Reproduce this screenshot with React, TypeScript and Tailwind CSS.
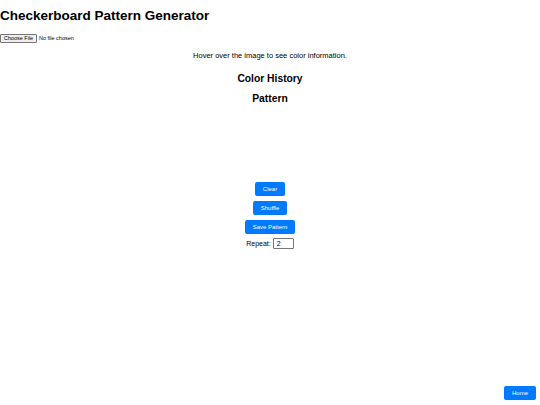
import { useState } from "react";

// Checkerboard pattern generator: upload, colour info, history, pattern controls.

function Btn({ label, w }: { label: string; w: string }) {
  return (
    <button
      className={`h-[14px] ${w} rounded-[2px] bg-[#007bff] text-white text-[6px] leading-none flex items-center justify-center`}
    >
      {label}
    </button>
  );
}

export default function App() {
  const [repeat, setRepeat] = useState("2");

  return (
    <div className="min-h-[405px] bg-white text-black font-['Liberation_Sans',Arial,sans-serif]">
      <h1 className="pt-[7px] text-[13.5px] font-bold leading-[18px]">Checkerboard Pattern Generator</h1>

      <div className="mt-[9px] flex items-center gap-[2px] text-[5.5px] leading-none">
        <span className="h-[9px] w-[37px] flex items-center justify-center border border-[#767676] rounded-[1px] bg-[#efefef]">
          Choose File
        </span>
        <span>No file chosen</span>
      </div>

      <div className="flex flex-col items-center">
        <p className="mt-[8px] text-[7.5px] leading-[10px]">Hover over the image to see color information.</p>
        <h2 className="mt-[11px] text-[10.3px] font-bold leading-[13px]">Color History</h2>
        <h2 className="mt-[7px] text-[10.3px] font-bold leading-[13px]">Pattern</h2>

        <div className="h-[77px]" />

        <div className="flex flex-col items-center gap-[5px]">
          <Btn label="Clear" w="w-[30px]" />
          <Btn label="Shuffle" w="w-[34px]" />
          <Btn label="Save Pattern" w="w-[50px]" />
        </div>

        <div className="mt-[4px] flex items-center gap-[2px] text-[7px] leading-none">
          <span>Repeat:</span>
          <input
            value={repeat}
            onChange={(e) => setRepeat(e.target.value)}
            className="h-[11px] w-[21px] border border-[#767676] rounded-[1px] px-[3px] text-[7px] leading-none outline-none"
          />
        </div>
      </div>

      <button className="fixed right-[4px] bottom-[5px] h-[14px] w-[32px] rounded-[2px] bg-[#007bff] text-white text-[6px] leading-none flex items-center justify-center">
        Home
      </button>
    </div>
  );
}
